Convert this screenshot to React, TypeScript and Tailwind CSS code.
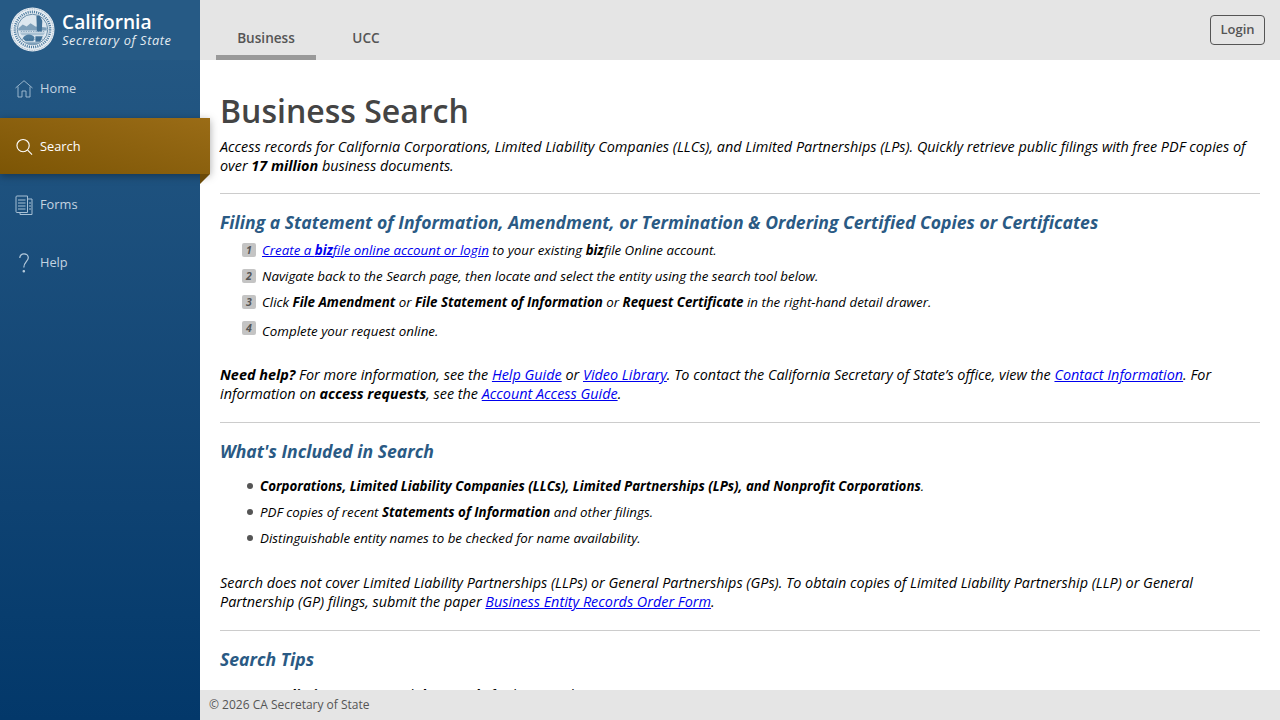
const Seal = () => (
  <svg viewBox="0 0 46 46" className="w-[45px] h-[45px] shrink-0">
    <circle cx="23" cy="23" r="22.5" fill="#e8eef3" />
    <circle cx="23" cy="23" r="21.2" fill="none" stroke="#6f90ac" strokeWidth="0.7" strokeDasharray="0.9 0.9" />
    <circle cx="23" cy="23" r="18" fill="none" stroke="#4d7ca0" strokeWidth="2.6" strokeDasharray="1.1 1.1" />
    <circle cx="23" cy="23" r="15.6" fill="#dde7ef" stroke="#2f6289" strokeWidth="0.7" />
    <path d="M8.5 22 L13 18 L17 20 L21 16.5 L26 20 L37.5 21 L37.5 24 L8.5 24Z" fill="#7fa0ba" />
    <path d="M27 9 L30.5 9 L33 14 L32.5 25 L27.5 25Z" fill="#3f6f96" />
    <path d="M10 26 H36 L34 29 H12Z" fill="#a9c1d3" />
    <path d="M13 32 C16 27 22 27 25 31 L24 35 H16Z" fill="#4d7ca0" />
    <path d="M26 30 H33.5 L31 35.5 H26Z" fill="#3f6f96" />
    <path d="M15.5 36 H30.5 L27 38.5 H19Z" fill="#7fa0ba" />
    <path d="M11 25 H35 M12 33 H34" stroke="#2f6289" strokeWidth="0.5" strokeDasharray="1.5 1" />
  </svg>
);

const HomeIcon = () => (
  <svg viewBox="0 0 18 18" className="w-[18px] h-[18px]" fill="none" stroke="#a6bfd4" strokeWidth="0.9">
    <path d="M0.5 8 L9 0.7 L17.5 8" />
    <path d="M3 6.5 V17 H7 V11 H11 V17 H15 V6.5" />
  </svg>
);

const SearchIcon = () => (
  <svg viewBox="0 0 18 18" className="w-[17px] h-[18px]" fill="none" stroke="#fff" strokeWidth="1.2">
    <circle cx="7.5" cy="7.5" r="6.5" />
    <path d="M12.3 12.3 L17 17" />
  </svg>
);

const FormsIcon = () => (
  <svg viewBox="0 0 18 20" className="w-[18px] h-5" fill="none" stroke="#a6bfd4" strokeWidth="1">
    <path d="M12.5 17.5 V1 H2 Q1 1 1 2 V16.5 Q1 17.5 2 17.5 H12.5" />
    <path d="M12.5 4 H17 V19.5 H5 V17.5" />
    <path d="M3 5 H10.5 M3 8 H10.5 M3 11 H10.5 M3 14 H10.5" strokeWidth="1.2" />
    <path d="M14 8 H16 M14 11 H16 M14 14 H16" />
  </svg>
);

const HelpIcon = () => (
  <svg viewBox="0 0 10 20" className="w-[10px] h-5 ml-[4px]" fill="none" stroke="#b4cadc" strokeWidth="1.2">
    <path d="M0.8 5 C0.8 2.5 2.5 0.8 5 0.8 C7.5 0.8 9.3 2.5 9.3 4.8 C9.3 8.2 4.8 9 4.8 14.5" />
    <circle cx="4.8" cy="18.2" r="0.7" fill="#b4cadc" />
  </svg>
);

const NavItem = ({ icon, label }: { icon: React.ReactNode; label: string }) => (
  <div className="h-[58px] flex items-center pl-[15px] text-[12.8px] text-[#c4d4e1]">
    <span className="w-[25px] flex">{icon}</span>
    {label}
  </div>
);

const Step = ({ n, className, children }: { n: number; className: string; children: React.ReactNode }) => (
  <li className={"flex items-start text-[13.33px] leading-[18px] " + className}>
    <span className="w-[14px] h-[14px] mt-[2px] mr-[6px] rounded-[2px] bg-[#c4c4c4] text-[#555] text-[10.5px] leading-[14px] font-bold text-center shrink-0">{n}</span>
    <span>{children}</span>
  </li>
);

const Dot = ({ children }: { children: React.ReactNode }) => (
  <li className="flex items-center h-[26px] text-[13.33px]">
    <span className="w-[6px] h-[6px] rounded-full bg-[#555] ml-[27px] mr-[7px]" />
    <span>{children}</span>
  </li>
);

const A = ({ children }: { children: React.ReactNode }) => <a href="#" className="text-[#0000ee] underline">{children}</a>;

const H2 = ({ children }: { children: React.ReactNode }) => (
  <h2 className="text-[17.6px] leading-[24px] font-bold text-[#2a5a84]">{children}</h2>
);

export default function App() {
  return (
    <div className="w-[1280px] h-[720px] flex overflow-hidden bg-white" style={{ fontFamily: '"Open Sans", sans-serif' }}>
      <aside className="relative z-10 w-[200px] shrink-0 bg-gradient-to-b from-[#265a85] to-[#03386a]">
        <div className="h-[60px] flex items-center pl-[10px] gap-[7px] text-white bg-[#265a85] pb-[1px]">
          <Seal />
          <div className="-mt-[2px]">
            <div className="text-[19.2px] leading-[23px] font-semibold">California</div>
            <div className="text-[12.8px] leading-[14px] italic tracking-[0.6px] text-[#e4ecf2]">Secretary of State</div>
          </div>
        </div>
        <NavItem icon={<HomeIcon />} label="Home" />
        <div className="relative w-[210px] h-[56px] flex items-center pl-[16px] pt-[1px] text-[12.8px] text-white bg-gradient-to-tr from-[#7c5505] to-[#9a6c16] shadow-[0_2px_8px_rgba(0,0,0,0.35)]">
          <span className="w-[24px] flex"><SearchIcon /></span>
          Search
          <span className="absolute left-[200px] top-[56px] border-t-[10px] border-r-[10px] border-t-[#6b4a08] border-r-transparent" />
        </div>
        <div className="h-[2px]" />
        <NavItem icon={<FormsIcon />} label="Forms" />
        <NavItem icon={<HelpIcon />} label="Help" />
      </aside>

      <div className="flex-1 min-w-0 flex flex-col">
        <header className="h-[60px] shrink-0 bg-[#e5e5e5] flex items-end pl-[16px] pr-[15px] relative">
          <div className="w-[100px] h-[32px] text-center text-[13.6px] leading-[20px] font-semibold text-[#555] border-b-[5px] border-[#999]">Business</div>
          <div className="w-[100px] h-[32px] text-center text-[13.6px] leading-[20px] font-semibold text-[#555]">UCC</div>
          <button className="absolute right-[15px] top-[15px] w-[55px] h-[30px] rounded-[4px] border border-[#555] text-[13px] font-semibold text-[#555]">Login</button>
        </header>

        <main className="flex-1 min-h-0 overflow-hidden px-[20px] pt-[28px] italic text-[14.4px] leading-[19px] text-black">
          <h1 className="not-italic text-[32px] leading-[46px] font-semibold text-[#444]">Business Search</h1>
          <p className="mt-[3px]">
            Access records for California Corporations, Limited Liability Companies (LLCs), and Limited Partnerships (LPs). Quickly retrieve public filings with free PDF copies of over <b>17 million</b> business documents.
          </p>
          <hr className="mt-[18px] border-[#ccc]" />
          <div className="mt-[16px]"><H2>Filing a Statement of Information, Amendment, or Termination &amp; Ordering Certified Copies or Certificates</H2></div>
          <ol className="mt-[7px] pl-[22px]">
            <Step n={1} className="h-[26px]"><A>Create a <b>biz</b>file online account or login</A> to your existing <b>biz</b>file Online account.</Step>
            <Step n={2} className="h-[26px]">Navigate back to the Search page, then locate and select the entity using the search tool below.</Step>
            <Step n={3} className="h-[26px]">Click <b>File Amendment</b> or <b>File Statement of Information</b> or <b>Request Certificate</b> in the right-hand detail drawer.</Step>
            <Step n={4} className="h-[21px]"><span className="relative top-[3px]">Complete your request online.</span></Step>
          </ol>
          <p className="mt-[25px]">
            <b>Need help?</b> For more information, see the <A>Help Guide</A> or <A>Video Library</A>. To contact the California Secretary of State’s office, view the <A>Contact Information</A>. For information on <b>access requests</b>, see the <A>Account Access Guide</A>.
          </p>
          <hr className="mt-[19px] border-[#ccc]" />
          <div className="mt-[16px]"><H2>What's Included in Search</H2></div>
          <ul className="mt-[10px]">
            <Dot><b>Corporations, Limited Liability Companies (LLCs), Limited Partnerships (LPs), and Nonprofit Corporations</b>.</Dot>
            <Dot>PDF copies of recent <b>Statements of Information</b> and other filings.</Dot>
            <Dot>Distinguishable entity names to be checked for name availability.</Dot>
          </ul>
          <p className="mt-[22px]">
            Search does not cover Limited Liability Partnerships (LLPs) or General Partnerships (GPs). To obtain copies of Limited Liability Partnership (LLP) or General Partnership (GP) filings, submit the paper <A>Business Entity Records Order Form</A>.
          </p>
          <hr className="mt-[19px] border-[#ccc]" />
          <div className="mt-[16px]"><H2>Search Tips</H2></div>
          <p className="mt-[14px] pl-[40px]">Use <b>distinct names</b> with <b>keywords</b> for best results.</p>
        </main>

        <footer className="h-[30px] shrink-0 bg-[#e5e5e5] pl-[9px] flex items-center text-[12px] text-[#555]">© 2026 CA Secretary of State</footer>
      </div>
    </div>
  );
}
